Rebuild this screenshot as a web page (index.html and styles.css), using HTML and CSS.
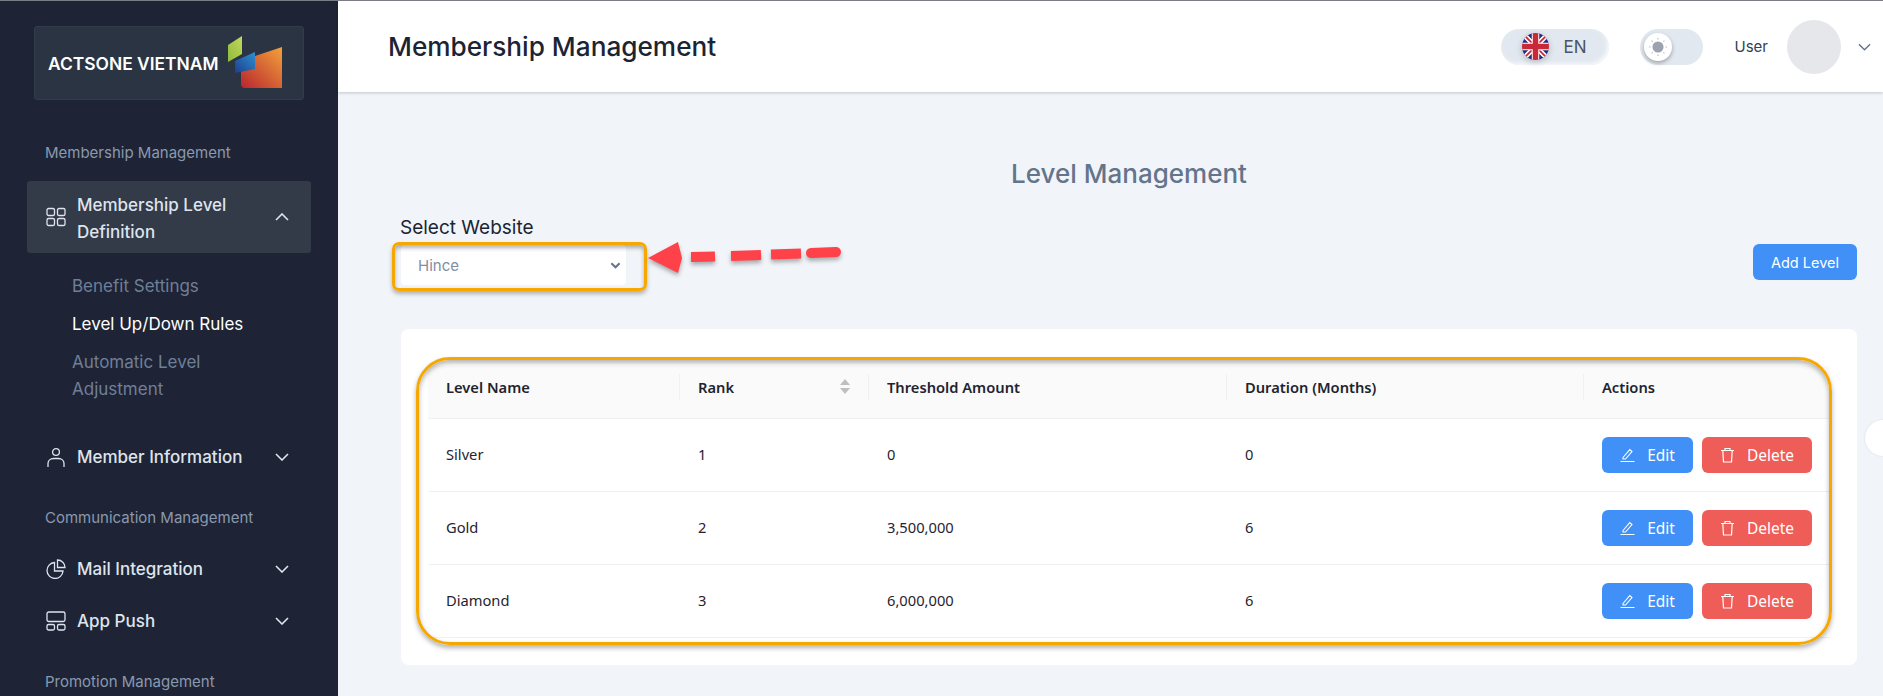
FILE: index.html
```html
<!DOCTYPE html>
<html lang="en">
<head>
    <meta charset="UTF-8">
    <meta name="viewport" content="width=device-width, initial-scale=1.0">
    <title>Level Management</title>
    <link rel="stylesheet" href="styles.css">
</head>
<body>
    <aside class="sidebar">
        <div class="logo">
            <span class="logo-text">ACTSONE VIETNAM</span>
            <svg class="logo-mark" width="60" height="54" viewBox="0 0 60 54">
                <defs>
                    <linearGradient id="logoOrange" x1="0" y1="1" x2="1" y2="0">
                        <stop offset="0" stop-color="#b8252f"/>
                        <stop offset="1" stop-color="#f2a23a"/>
                    </linearGradient>
                    <linearGradient id="logoBlue" x1="0" y1="1" x2="1" y2="0">
                        <stop offset="0" stop-color="#1d3f8f"/>
                        <stop offset="1" stop-color="#2f8fd0"/>
                    </linearGradient>
                    <linearGradient id="logoGreen" x1="0" y1="1" x2="1" y2="0">
                        <stop offset="0" stop-color="#8fbb3c"/>
                        <stop offset="1" stop-color="#c3d75c"/>
                    </linearGradient>
                </defs>
                <polygon points="0,9 14,0 14,18 0,26" fill="url(#logoGreen)"/>
                <path d="M13 35 L27 31 L27 20 L54 11 L54 52 L17 52 Q13 52 13 48 Z" fill="url(#logoOrange)"/>
                <polygon points="7,25 27,16 27,33 7,37" fill="url(#logoBlue)"/>
            </svg>
        </div>

        <p class="nav-label nav-label-first">Membership Management</p>
        <div class="nav-item nav-item-open">
            <svg class="nav-icon" viewBox="0 0 20 20" fill="none" stroke="currentColor" stroke-width="1.3">
                <rect x="1" y="1.5" width="7.5" height="7" rx="1.6"/>
                <rect x="11.5" y="1.5" width="7.5" height="7" rx="1.6"/>
                <rect x="1" y="11.5" width="7.5" height="7" rx="1.6"/>
                <rect x="11.5" y="11.5" width="7.5" height="7" rx="1.6"/>
            </svg>
            <span class="nav-text">Membership Level Definition</span>
            <svg class="nav-chevron" viewBox="0 0 14 8" fill="none" stroke="currentColor" stroke-width="1.6"><path d="M1 7l6-6 6 6"/></svg>
        </div>
        <ul class="sub-nav">
            <li>Benefit Settings</li>
            <li class="active">Level Up/Down Rules</li>
            <li>Automatic Level Adjustment</li>
        </ul>
        <div class="nav-item">
            <svg class="nav-icon" viewBox="0 0 20 20" fill="none" stroke="currentColor" stroke-width="1.3">
                <circle cx="10" cy="5" r="3.4"/>
                <path d="M2 20v-3.5c0-3 2.500-5 5.500-5h5c3 0 5.500 2 5.500 5V20"/>
            </svg>
            <span class="nav-text">Member Information</span>
            <svg class="nav-chevron" viewBox="0 0 14 8" fill="none" stroke="currentColor" stroke-width="1.6"><path d="M1 1l6 6 6-6"/></svg>
        </div>

        <p class="nav-label">Communication Management</p>
        <div class="nav-item">
            <svg class="nav-icon" viewBox="0 0 20 20" fill="none" stroke="currentColor" stroke-width="1.3">
                <path d="M8.500 3.500a8 8 0 1 0 8.500 8.500h-8.500z"/>
                <path d="M11.500 1a7.500 7.500 0 0 1 7.500 7.500h-7.500z"/>
            </svg>
            <span class="nav-text">Mail Integration</span>
            <svg class="nav-chevron" viewBox="0 0 14 8" fill="none" stroke="currentColor" stroke-width="1.6"><path d="M1 1l6 6 6-6"/></svg>
        </div>
        <div class="nav-item">
            <svg class="nav-icon" viewBox="0 0 20 20" fill="none" stroke="currentColor" stroke-width="1.3">
                <rect x="1" y="1" width="18" height="9.500" rx="1.800"/>
                <rect x="1" y="13.500" width="7.500" height="5.500" rx="1.500"/>
                <rect x="11.500" y="13.500" width="7.500" height="5.500" rx="1.500"/>
            </svg>
            <span class="nav-text">App Push</span>
            <svg class="nav-chevron" viewBox="0 0 14 8" fill="none" stroke="currentColor" stroke-width="1.6"><path d="M1 1l6 6 6-6"/></svg>
        </div>

        <p class="nav-label">Promotion Management</p>
    </aside>

    <div class="main">
        <header class="topbar">
            <h1>Membership Management</h1>
            <div class="topbar-right">
                <div class="lang-pill">
                    <svg class="flag" width="27" height="27" viewBox="0 0 27 27">
                        <defs><clipPath id="flagClip"><circle cx="13.500" cy="13.500" r="13.500"/></clipPath></defs>
                        <g clip-path="url(#flagClip)">
                            <rect width="27" height="27" fill="#1f2f78"/>
                            <path d="M0 0L27 27M27 0L0 27" stroke="#fff" stroke-width="5"/>
                            <path d="M0 0L27 27M27 0L0 27" stroke="#c8283a" stroke-width="1.800"/>
                            <path d="M13.500 0V27M0 13.500H27" stroke="#fff" stroke-width="7.500"/>
                            <path d="M13.500 0V27M0 13.500H27" stroke="#c8283a" stroke-width="5.500"/>
                        </g>
                    </svg>
                    <span>EN</span>
                </div>
                <div class="theme-toggle">
                    <span class="theme-knob">
                        <svg width="20" height="20" viewBox="0 0 18 18">
                            <circle cx="9" cy="9" r="5" fill="#9ca3af"/>
                            <path d="M9 .8v1.400M9 15.800v1.400M.8 9h1.400M15.800 9h1.400M3.200 3.200l1 1M13.800 13.800l1 1M3.200 14.800l1-1M13.800 4.200l1-1" stroke="#b6bcc6" stroke-width="1"/>
                        </svg>
                    </span>
                </div>
                <span class="user-name">User</span>
                <span class="avatar"></span>
                <svg class="user-chevron" width="13" height="8" viewBox="0 0 14 8" fill="none" stroke="#64748b" stroke-width="1.500"><path d="M1 1l6 6 6-6"/></svg>
            </div>
        </header>

        <main class="content">
            <h2 class="page-title">Level Management</h2>
            <div class="toolbar">
                <div class="site-field">
                    <label class="site-label">Select Website</label>
                    <div class="site-select">
                        <span>Hince</span>
                        <svg width="11" height="7" viewBox="0 0 12 7" fill="none" stroke="#64748b" stroke-width="2.200"><path d="M1.500 1l4.500 4.500L10.500 1"/></svg>
                    </div>
                    <span class="select-outline"></span>
                    <svg class="arrow-note" width="200" height="44" viewBox="0 0 200 44">
                        <polygon points="2,23 32,7 36,23 32,38" fill="#ff4249"/>
                        <path d="M45 22L69 21.500M85 21L115 20M125 19.500L155 18.500" stroke="#ff4249" stroke-width="10"/>
                        <path d="M165 18L190 17" stroke="#ff4249" stroke-width="10" stroke-linecap="round"/>
                    </svg>
                </div>
                <button class="btn btn-add">Add Level</button>
            </div>

            <section class="card">
                <span class="table-outline"></span>
                <table class="levels">
                    <thead>
                        <tr>
                            <th class="col-name">Level Name</th>
                            <th class="col-rank">
                                Rank
                                <svg class="sort-icon" width="10" height="15" viewBox="0 0 10 15"><path d="M5 0l5 6H0zM5 15l-5-6h10z" fill="#bfbfbf"/></svg>
                            </th>
                            <th class="col-amount">Threshold Amount</th>
                            <th class="col-months">Duration (Months)</th>
                            <th class="col-actions">Actions</th>
                        </tr>
                    </thead>
                    <tbody>
                        <tr>
                            <td>Silver</td><td>1</td><td>0</td><td>0</td>
                            <td>
                                <div class="actions">
                                    <button class="btn btn-edit"><svg width="15" height="15" viewBox="0 0 15 15" fill="none" stroke="currentColor" stroke-width="1.100"><path d="M3 10.500L9.800 2.600l2.200 2-6.500 7.400H3zM.5 14.500h14"/></svg>Edit</button>
                                    <button class="btn btn-delete"><svg width="15" height="16" viewBox="0 0 15 16" fill="none" stroke="currentColor" stroke-width="1.200"><path d="M1 3.500h13M5 3.500V1.500h5v2M2.800 3.500l.7 11.500h8l.7-11.500"/></svg>Delete</button>
                                </div>
                            </td>
                        </tr>
                        <tr>
                            <td>Gold</td><td>2</td><td>3,500,000</td><td>6</td>
                            <td>
                                <div class="actions">
                                    <button class="btn btn-edit"><svg width="15" height="15" viewBox="0 0 15 15" fill="none" stroke="currentColor" stroke-width="1.100"><path d="M3 10.500L9.800 2.600l2.200 2-6.500 7.400H3zM.5 14.500h14"/></svg>Edit</button>
                                    <button class="btn btn-delete"><svg width="15" height="16" viewBox="0 0 15 16" fill="none" stroke="currentColor" stroke-width="1.200"><path d="M1 3.500h13M5 3.500V1.500h5v2M2.800 3.500l.7 11.500h8l.7-11.500"/></svg>Delete</button>
                                </div>
                            </td>
                        </tr>
                        <tr>
                            <td>Diamond</td><td>3</td><td>6,000,000</td><td>6</td>
                            <td>
                                <div class="actions">
                                    <button class="btn btn-edit"><svg width="15" height="15" viewBox="0 0 15 15" fill="none" stroke="currentColor" stroke-width="1.100"><path d="M3 10.500L9.800 2.600l2.200 2-6.500 7.400H3zM.5 14.500h14"/></svg>Edit</button>
                                    <button class="btn btn-delete"><svg width="15" height="16" viewBox="0 0 15 16" fill="none" stroke="currentColor" stroke-width="1.200"><path d="M1 3.500h13M5 3.500V1.500h5v2M2.800 3.500l.7 11.500h8l.7-11.500"/></svg>Delete</button>
                                </div>
                            </td>
                        </tr>
                    </tbody>
                </table>
            </section>
            <span class="edge-handle"></span>
        </main>
    </div>
</body>
</html>
```

FILE: styles.css
```css
* {
    box-sizing: border-box;
}
html, body {
    height: 100%;
}
body {
    margin: 0;
    display: flex;
    height: 696px;
    overflow: hidden;
    border-top: 1px solid #7a7d85;
    font-family: Inter, "Noto Sans", sans-serif;
    background-color: #f1f5f9;
}

/* sidebar */
.sidebar {
    width: 338px;
    flex-shrink: 0;
    background-color: #1e2435;
    padding: 25px 27px 0;
    overflow: hidden;
}
.logo {
    display: flex;
    align-items: center;
    justify-content: space-between;
    width: 270px;
    height: 74px;
    margin-left: 7px;
    padding: 0 22px 0 13px;
    background-color: #2a3443;
    border: 1px solid #323c4b;
    border-radius: 3px;
}
.logo-text {
    color: #fff;
    font-size: 17.400px;
    font-weight: 600;
    white-space: nowrap;
}
.logo-mark {
    margin-top: -1px;
    margin-right: -7px;
}
.nav-label {
    margin: 0;
    padding-left: 18px;
    height: 20px;
    line-height: 20px;
    font-size: 15px;
    color: #8a99af;
    white-space: nowrap;
}
.nav-label-first {
    margin-top: 43px;
    margin-bottom: 18px;
}
.nav-item {
    display: flex;
    align-items: center;
    min-height: 52px;
    padding: 0 22px 0 19px;
    color: #dee4ee;
    font-size: 17px;
    font-weight: 500;
    line-height: 27px;
}
.nav-item-open {
    height: 72px;
    background-color: #333a48;
    border-radius: 3px;
}
.nav-item-open .nav-text {
    padding-top: 3px;
}
.nav-icon {
    width: 20px;
    height: 20px;
    flex-shrink: 0;
    margin-right: 11px;
}
.nav-text {
    flex: 1;
}
.nav-chevron {
    width: 14px;
    height: 8px;
    flex-shrink: 0;
}
.sub-nav {
    list-style: none;
    margin: 0;
    padding: 20px 0 0 45px;
    color: #6f7f98;
    font-size: 17px;
    line-height: 27px;
}
.sub-nav li {
    margin-bottom: 11px;
    width: 180px;
}
.sub-nav li:first-child, .sub-nav .active {
    width: auto;
}
.sub-nav .active {
    color: #fff;
}
.sidebar .sub-nav + .nav-item {
    margin-top: 28px;
    margin-bottom: 8px;
}
.nav-label + .nav-item:not(.nav-item-open) {
    margin-top: 15px;
}
.nav-item + .nav-label {
    margin-top: 25px;
}

/* top bar */
.main {
    flex: 1;
    min-width: 0;
    display: flex;
    flex-direction: column;
}
.topbar {
    display: flex;
    align-items: center;
    justify-content: space-between;
    height: 91px;
    flex-shrink: 0;
    padding: 0 12px 0 50px;
    background-color: #fff;
    box-shadow: 0 1px 3px rgba(0, 0, 0, 0.2);
}
.topbar h1 {
    margin: 0;
    font-size: 26.200px;
    font-weight: 500;
    color: #1c2434;
}
.topbar-right {
    display: flex;
    align-items: center;
}
.lang-pill {
    display: flex;
    align-items: center;
    gap: 15px;
    width: 108px;
    height: 36px;
    padding-left: 21px;
    border-radius: 18px;
    background-color: #e2e8f0;
    box-shadow: inset -2px -2px 4px rgba(255, 255, 255, 0.7);
    color: #4b5563;
    font-size: 17px;
}
.flag {
    filter: drop-shadow(0 2px 3px rgba(0, 0, 0, 0.2));
}
.theme-toggle {
    display: flex;
    align-items: center;
    width: 63px;
    height: 36px;
    margin-left: 31px;
    padding-left: 4px;
    border-radius: 18px;
    background-color: #e2e8f0;
}
.theme-knob {
    display: flex;
    align-items: center;
    justify-content: center;
    width: 28px;
    height: 28px;
    border-radius: 50%;
    background-color: #fff;
    box-shadow: 0 2px 4px rgba(0, 0, 0, 0.3);
}
.user-name {
    margin-left: 32px;
    font-size: 15px;
    color: #334155;
}
.avatar {
    width: 54px;
    height: 54px;
    margin-left: 19px;
    border-radius: 50%;
    background-color: #e5e7eb;
}
.user-chevron {
    margin-left: 17px;
}

/* content */
.content {
    position: relative;
    flex: 1;
    padding: 0 26px 0 63px;
}
.page-title {
    margin: 66px 0 0;
    text-align: center;
    font-size: 26px;
    line-height: 32px;
    font-weight: 500;
    color: #64748b;
}
.toolbar {
    display: flex;
    align-items: flex-end;
    justify-content: space-between;
    margin-top: 26px;
}
.site-field {
    position: relative;
}
.site-label {
    display: block;
    margin-bottom: 5px;
    margin-left: -1px;
    font-size: 19px;
    line-height: 24px;
    color: #1c2434;
}
.site-select {
    display: flex;
    align-items: center;
    justify-content: space-between;
    width: 225px;
    height: 40px;
    padding: 0 5px 0 17px;
    border-radius: 4px;
    background-color: #fff;
    color: #7f8ea4;
    font-size: 15px;
}
.select-outline {
    position: absolute;
    left: -9px;
    bottom: -6px;
    width: 255px;
    height: 49px;
    border: 3px solid #f6a800;
    border-radius: 7px;
    box-shadow: 0 3px 4px rgba(0, 0, 0, 0.28), inset 0 3px 4px rgba(0, 0, 0, 0.3);
}
.arrow-note {
    position: absolute;
    left: 245px;
    bottom: 6px;
    filter: drop-shadow(0 3px 2px rgba(0, 0, 0, 0.3));
}
.btn {
    display: inline-flex;
    align-items: center;
    justify-content: center;
    border: 0;
    border-radius: 6px;
    color: #fff;
    font-family: "Noto Sans", sans-serif;
    font-size: 15.500px;
}
.btn-add {
    width: 104px;
    height: 36px;
    margin-bottom: 5px;
    background-color: #4090f7;
    font-family: Inter, sans-serif;
    font-size: 14.500px;
}
.card {
    position: relative;
    margin-top: 44px;
    height: 336px;
    padding: 37px 27px 0;
    border-radius: 8px;
    background-color: #fff;
}
.table-outline {
    position: absolute;
    z-index: 1;
    left: 15px;
    right: 25px;
    top: 28px;
    height: 288px;
    border: 3px solid #f6a800;
    border-radius: 34px;
    box-shadow: 0 3px 5px rgba(0, 0, 0, 0.3), inset 0 3px 5px rgba(0, 0, 0, 0.3);
    pointer-events: none;
}
.levels {
    width: 100%;
    border-collapse: collapse;
    table-layout: fixed;
    font-family: "Noto Sans", sans-serif;
    font-size: 14.700px;
    color: #1f2430;
}
.levels th {
    position: relative;
    height: 52px;
    padding: 0 17px 10px 18px;
    text-align: left;
    font-weight: 600;
    background-color: #fafafa;
    border-bottom: 1px solid #f0f0f0;
}
.levels th:not(:last-child)::after {
    content: "";
    position: absolute;
    right: 0;
    top: 8px;
    height: 26px;
    width: 1px;
    background-color: #f0f0f0;
}
.levels td {
    height: 73px;
    padding: 0 17px 2px 18px;
    border-bottom: 1px solid #f0f0f0;
}
.col-name { width: 252px; }
.col-rank { width: 189px; }
.col-amount { width: 358px; }
.col-months { width: 357px; }
.sort-icon {
    position: absolute;
    right: 19px;
    top: 13px;
}
.actions {
    display: flex;
    gap: 9px;
    margin-bottom: -2px;
}
.btn-edit, .btn-delete {
    height: 36px;
    gap: 12px;
}
.btn-edit {
    width: 91px;
    background-color: #4090f7;
}
.btn-delete {
    width: 110px;
    background-color: #ef5d58;
}
.edge-handle {
    position: absolute;
    right: -18px;
    top: 328px;
    width: 36px;
    height: 36px;
    border-radius: 50%;
    background-color: #fff;
    box-shadow: 0 0 2px rgba(0, 0, 0, 0.12);
}
```
